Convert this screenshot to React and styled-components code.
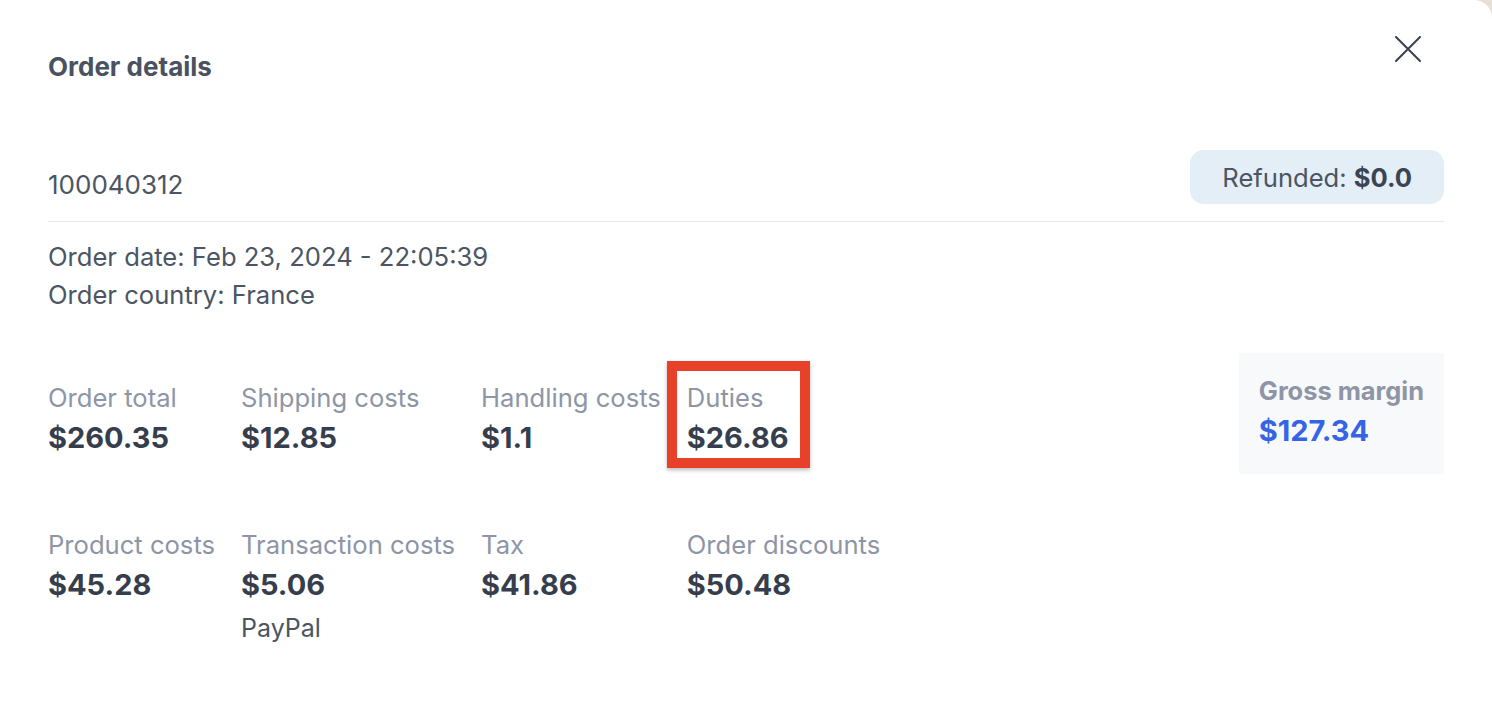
import React from 'react'
import { styled, createGlobalStyle } from 'styled-components'

const GlobalStyle = createGlobalStyle`
  * { box-sizing: border-box; }
  html, body { margin: 0; padding: 0; }
  body {
    background: #e6e0d6;
    font-family: Inter, "Noto Sans", "Liberation Sans", sans-serif;
    overflow: hidden;
  }
`

const stats = [
  { id: 'total', label: 'Order total', value: '$260.35' },
  { id: 'shipping', label: 'Shipping costs', value: '$12.85' },
  { id: 'handling', label: 'Handling costs', value: '$1.1' },
  { id: 'duties', label: 'Duties', value: '$26.86', marked: true },
  { id: 'product', label: 'Product costs', value: '$45.28' },
  { id: 'transaction', label: 'Transaction costs', value: '$5.06', note: 'PayPal' },
  { id: 'tax', label: 'Tax', value: '$41.86' },
  { id: 'discounts', label: 'Order discounts', value: '$50.48' },
]

function CloseIcon() {
  return (
    <svg width="26" height="26" viewBox="0 0 26 26" fill="none">
      <path d="M1 1L25 25M25 1L1 25" stroke="#374151" strokeWidth="2" strokeLinecap="round" />
    </svg>
  )
}

function App() {
  return (
    <>
      <GlobalStyle />
      <Modal>
        <Header>
          <Title>Order details</Title>
          <CloseButton aria-label="Close">
            <CloseIcon />
          </CloseButton>
        </Header>

        <OrderRow>
          <OrderNumber>100040312</OrderNumber>
          <RefundPill>
            Refunded: <b>$0.0</b>
          </RefundPill>
        </OrderRow>

        <Meta>
          <p>Order date: Feb 23, 2024 - 22:05:39</p>
          <p>Order country: France</p>
        </Meta>

        <StatsSection>
          <StatsGrid>
            {stats.map((item) => (
              <Stat key={item.id}>
                <Label>{item.label}</Label>
                <Value>{item.value}</Value>
                {item.note && <Note>{item.note}</Note>}
                {item.marked && <Marker />}
              </Stat>
            ))}
          </StatsGrid>
          <MarginCard>
            <MarginLabel>Gross margin</MarginLabel>
            <Value $accent>$127.34</Value>
          </MarginCard>
        </StatsSection>
      </Modal>
    </>
  )
}

const Modal = styled.div`
  min-height: 100vh;
  background: #fff;
  border-top-right-radius: 18px;
  padding: 0 48px;
  color: #4b5563;
`

const Header = styled.div`
  display: flex;
  justify-content: space-between;
  align-items: flex-start;
  padding-top: 36px;
`

const Title = styled.h2`
  margin: 15px 0 0;
  font-size: 26px;
  line-height: 32px;
  font-weight: 700;
  color: #4a5261;
`

const CloseButton = styled.button`
  display: flex;
  border: none;
  background: none;
  padding: 0;
  margin-right: 23px;
  cursor: pointer;
`

const OrderRow = styled.div`
  display: flex;
  justify-content: space-between;
  align-items: flex-end;
  margin-top: 67px;
  padding-bottom: 17px;
  border-bottom: 1px solid #e7e8ea;
`

const OrderNumber = styled.span`
  font-size: 26px;
  line-height: 38px;
  color: #4b5563;
`

const RefundPill = styled.div`
  height: 54px;
  display: flex;
  align-items: center;
  gap: 7px;
  padding: 0 32px;
  border-radius: 14px;
  background: #e4eef6;
  font-size: 25.6px;
  color: #4b5563;
  b {
    font-weight: 700;
    color: #3b4453;
  }
`

const Meta = styled.div`
  padding-top: 16px;
  p {
    margin: 0;
    font-size: 25.6px;
    line-height: 38px;
    color: #4b5563;
  }
`

const StatsSection = styled.div`
  display: flex;
  justify-content: space-between;
  align-items: flex-start;
  margin-top: 39px;
`

const StatsGrid = styled.div`
  display: grid;
  grid-template-columns: repeat(4, auto);
  justify-content: start;
  column-gap: 26px;
  row-gap: 71px;
  margin-top: 28px;
`

const Stat = styled.div`
  position: relative;
  display: flex;
  flex-direction: column;
`

const Label = styled.span`
  font-size: 25.6px;
  line-height: 34px;
  color: #8d95a6;
  white-space: nowrap;
`

const Value = styled.span`
  margin-top: 4px;
  font-size: 29px;
  line-height: 38px;
  font-weight: 700;
  color: ${(p) => (p.$accent ? '#3664e6' : '#363e4d')};
`

const Note = styled.span`
  margin-top: 7px;
  font-size: 25px;
  line-height: 34px;
  color: #4b5563;
`

const Marker = styled.div`
  position: absolute;
  top: -20px;
  left: -20px;
  width: 143px;
  height: 107px;
  border: 10px solid #e8412a;
  box-shadow: 0 2px 4px rgba(0, 0, 0, 0.28);
  pointer-events: none;
`

const MarginCard = styled.div`
  display: flex;
  flex-direction: column;
  padding: 21px 20px 24px;
  background: #f8f9fb;
`

const MarginLabel = styled.span`
  font-size: 25.4px;
  line-height: 34px;
  font-weight: 700;
  color: #8d95a6;
`

export default App
